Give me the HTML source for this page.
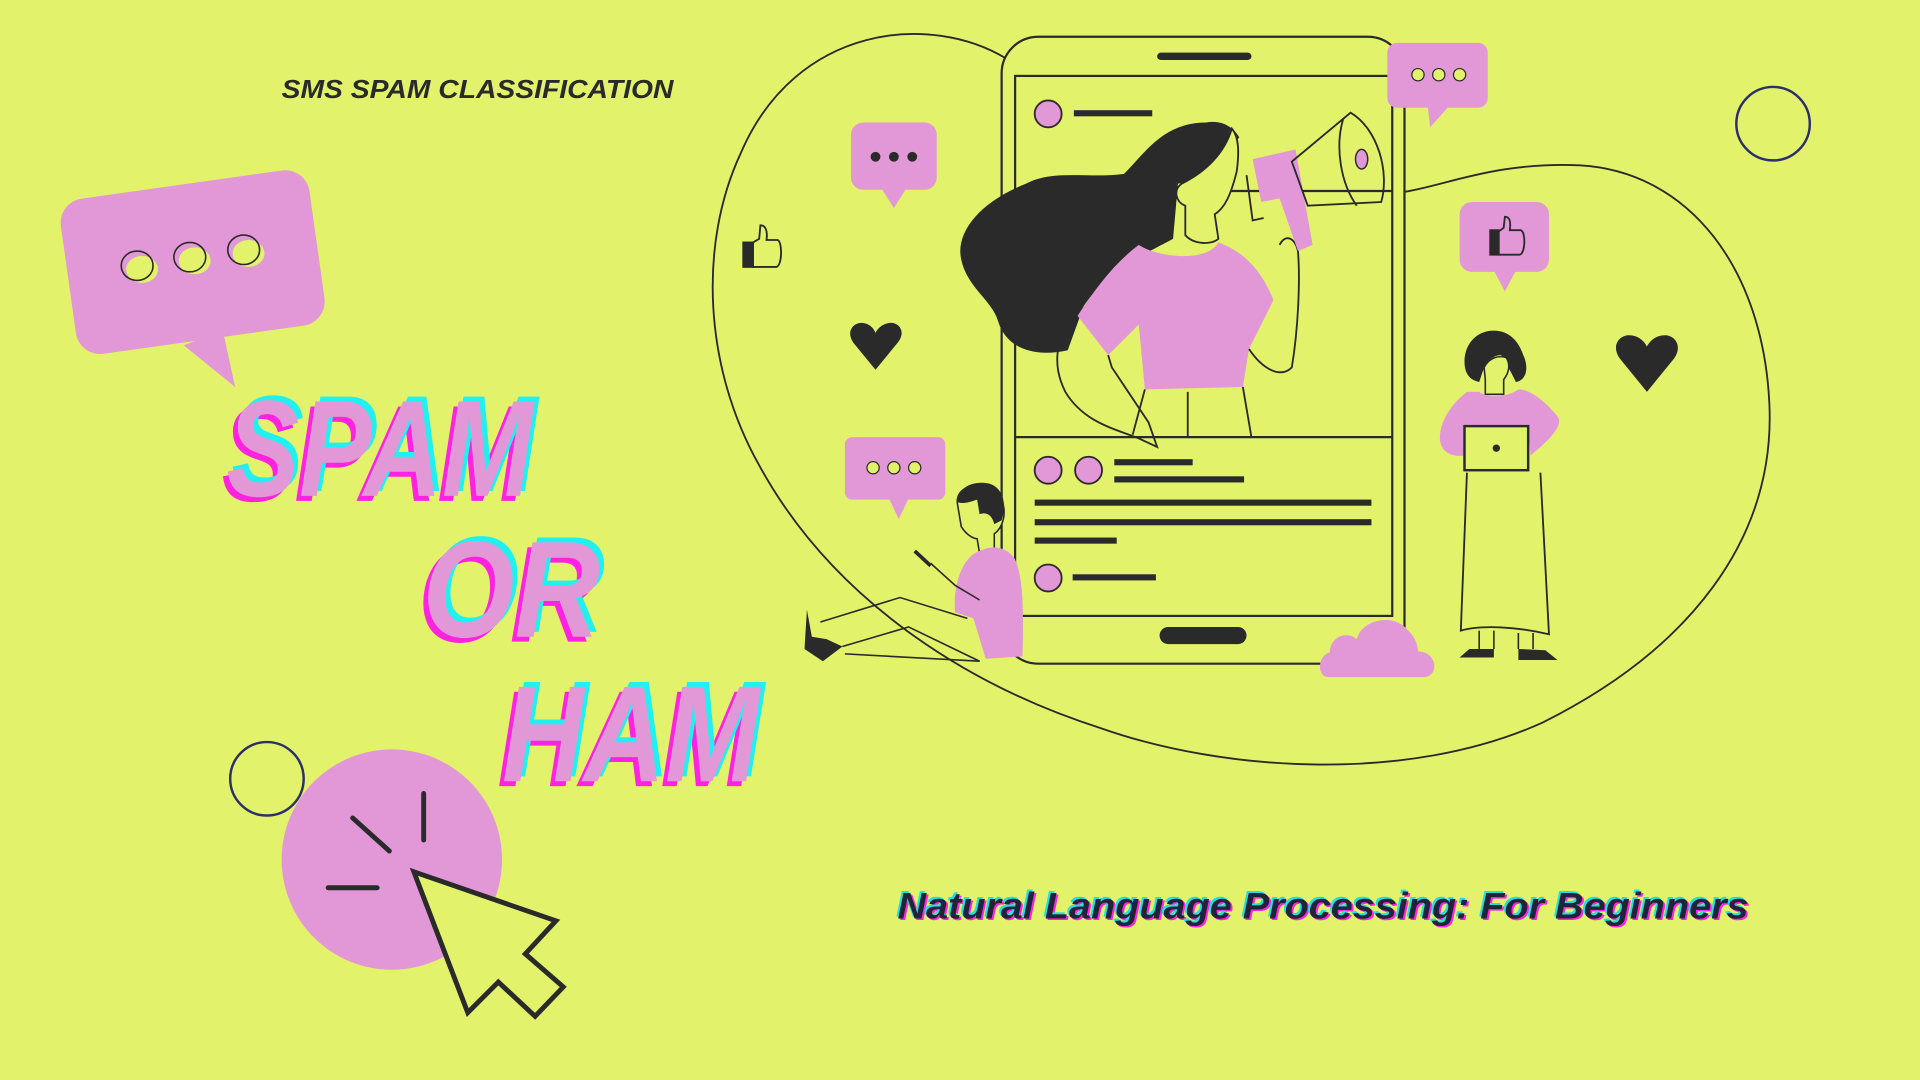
<!DOCTYPE html>
<html><head><meta charset="utf-8"><style>
html,body{margin:0;padding:0;background:#e2f26a;}
svg{display:block}
text{font-family:"Liberation Sans",sans-serif;font-weight:bold;font-style:italic}
</style></head><body>
<svg width="1920" height="1080" viewBox="0 0 1568 882" preserveAspectRatio="none" xmlns="http://www.w3.org/2000/svg">
<rect width="1568" height="882" fill="#e2f26a"/>
<text x="230" y="80" font-size="21" fill="#2a2a2a" textLength="320" lengthAdjust="spacingAndGlyphs">SMS SPAM CLASSIFICATION</text>

<g transform="rotate(-8 158 215)">
<rect x="55" y="150" width="205" height="128" rx="20" fill="#e298d6"/>
</g>
<polygon points="150,282 192,316 182,270" fill="#e298d6"/>
<g fill="#e2f26a"><ellipse cx="116" cy="220" rx="13" ry="11"/><ellipse cx="159" cy="213" rx="13" ry="11"/><ellipse cx="203" cy="207" rx="13" ry="11"/></g>
<g fill="none" stroke="#2a2a2a" stroke-width="1.3">
<ellipse cx="112" cy="217" rx="13" ry="12"/><ellipse cx="155" cy="210" rx="13" ry="12"/><ellipse cx="199" cy="204" rx="13" ry="12"/>
</g>

<g font-size="112">
<text x="181" y="409" fill="#ff22e0" textLength="250" lengthAdjust="spacingAndGlyphs">SPAM</text>
<text x="189" y="401" fill="#22f0f0" textLength="250" lengthAdjust="spacingAndGlyphs">SPAM</text>
<text x="185" y="405" fill="#e298d6" textLength="250" lengthAdjust="spacingAndGlyphs">SPAM</text>
<text x="341" y="524" fill="#ff22e0" textLength="145" lengthAdjust="spacingAndGlyphs">OR</text>
<text x="349" y="516" fill="#22f0f0" textLength="145" lengthAdjust="spacingAndGlyphs">OR</text>
<text x="345" y="520" fill="#e298d6" textLength="145" lengthAdjust="spacingAndGlyphs">OR</text>
<text x="406" y="642" fill="#ff22e0" textLength="210" lengthAdjust="spacingAndGlyphs">HAM</text>
<text x="414" y="634" fill="#22f0f0" textLength="210" lengthAdjust="spacingAndGlyphs">HAM</text>
<text x="410" y="638" fill="#e298d6" textLength="210" lengthAdjust="spacingAndGlyphs">HAM</text>
</g>

<circle cx="218" cy="636" r="30" fill="none" stroke="#2d2f6b" stroke-width="2"/>
<circle cx="1448" cy="101" r="30" fill="none" stroke="#2d2f6b" stroke-width="2"/>

<circle cx="320" cy="702" r="90" fill="#e298d6"/>
<polygon points="338,712 500,766 500,882 403,882" fill="#e2f26a"/>
<g stroke="#2a2a2a" stroke-width="4" stroke-linecap="round" fill="none">
<line x1="288" y1="668" x2="318" y2="695"/><line x1="346" y1="648" x2="346" y2="686"/><line x1="268" y1="725" x2="308" y2="725"/>
<path d="M338,712 L454,752 L429,779 L460,806 L437,830 L407,802 L382,827 Z"/>
</g>

<path d="M822,48 C760,10 650,20 605,125 C570,200 575,300 620,380 C680,490 790,560 900,595 C1000,630 1150,640 1260,590 C1380,530 1450,440 1445,330 C1440,220 1380,140 1290,135 C1220,132 1180,152 1145,157" fill="none" stroke="#2a2a2a" stroke-width="1.5"/>

<rect x="818" y="30" width="329" height="512" rx="30" fill="#e2f26a" stroke="#2a2a2a" stroke-width="1.8"/>
<rect x="829" y="62" width="308" height="441" fill="none" stroke="#2a2a2a" stroke-width="1.8"/>
<line x1="948" y1="46" x2="1019" y2="46" stroke="#2a2a2a" stroke-width="6" stroke-linecap="round"/>
<rect x="947" y="512" width="71" height="14" rx="7" fill="#2a2a2a"/>
<line x1="829" y1="156" x2="1137" y2="156" stroke="#2a2a2a" stroke-width="1.8"/>
<line x1="829" y1="357" x2="1137" y2="357" stroke="#2a2a2a" stroke-width="1.8"/>
<g fill="#e298d6" stroke="#2a2a2a" stroke-width="1.5">
<circle cx="856" cy="93" r="11"/><circle cx="856" cy="384" r="11"/><circle cx="889" cy="384" r="11"/><circle cx="856" cy="472" r="11"/>
</g>
<g fill="#2a2a2a">
<rect x="877" y="90" width="64" height="5"/><rect x="910" y="375" width="64" height="5"/><rect x="910" y="389" width="106" height="5"/>
<rect x="845" y="408" width="275" height="5"/><rect x="845" y="424" width="275" height="5"/><rect x="845" y="439" width="67" height="5"/>
<rect x="876" y="469" width="68" height="5"/>
</g>

<path d="M985,100 C950,100 935,125 918,142 C890,146 860,138 838,150 C800,165 780,190 785,212 C790,235 810,245 815,262 C822,285 845,292 872,286 L885,250 C905,220 940,205 958,195 L962,150 C980,148 1002,128 1012,112 C1006,102 996,98 985,100 Z" fill="#2a2a2a"/>
<path d="M1006,105 C1000,125 985,140 965,150 C958,155 960,165 968,168 L968,192 C975,200 990,200 995,195 L992,175 C1000,170 1005,160 1010,140 C1012,125 1012,112 1006,105 Z" fill="#e2f26a" stroke="#2a2a2a" stroke-width="1.5"/>
<path d="M930,200 C945,210 985,215 995,198 C1015,205 1030,220 1040,245 L1020,285 L1015,316 L935,318 L930,265 L905,290 L880,258 C895,235 910,215 930,200 Z" fill="#e298d6"/>
<path d="M880,258 C860,275 860,300 870,320 C885,345 910,350 930,358 L945,365 L938,345 L908,300 L905,290" fill="none" stroke="#2a2a2a" stroke-width="1.5"/>
<path d="M1020,285 C1030,300 1045,310 1055,300 C1060,270 1062,230 1060,205 C1058,195 1050,190 1045,200" fill="none" stroke="#2a2a2a" stroke-width="1.5"/>
<path d="M935,318 L925,355 M1015,316 L1022,357 M970,320 L970,357" stroke="#2a2a2a" stroke-width="1.5"/>
<path d="M1023,130 L1058,122 L1072,200 L1060,205 L1045,162 L1030,165 Z" fill="#e298d6"/>
<path d="M1055,132 L1103,92 C1125,105 1135,140 1128,165 L1068,168 Z" fill="none" stroke="#2a2a2a" stroke-width="1.5"/>
<path d="M1097,97 C1090,120 1095,150 1108,168" fill="none" stroke="#2a2a2a" stroke-width="1.5"/>
<ellipse cx="1112" cy="130" rx="5" ry="8" fill="#e298d6" stroke="#2a2a2a" stroke-width="1.2"/>
<path d="M1018,143 L1023,180 L1032,178" fill="none" stroke="#2a2a2a" stroke-width="1.5"/>

<rect x="695" y="100" width="70" height="55" rx="10" fill="#e298d6"/><polygon points="720,154 740,154 730,170" fill="#e298d6"/>
<g fill="#2a2a2a"><circle cx="715" cy="128" r="4"/><circle cx="730" cy="128" r="4"/><circle cx="745" cy="128" r="4"/></g>
<rect x="1133" y="35" width="82" height="53" rx="8" fill="#e298d6"/><polygon points="1166,87 1183,87 1168,104" fill="#e298d6"/>
<g fill="#e2f26a" stroke="#2a2a2a" stroke-width="1"><circle cx="1158" cy="61" r="5"/><circle cx="1175" cy="61" r="5"/><circle cx="1192" cy="61" r="5"/></g>
<rect x="1192" y="165" width="73" height="57" rx="10" fill="#e298d6"/><polygon points="1220,221 1238,221 1229,238" fill="#e298d6"/>
<rect x="690" y="357" width="82" height="51" rx="6" fill="#e298d6"/><polygon points="726,407 742,407 734,424" fill="#e298d6"/>
<g fill="#e2f26a" stroke="#2a2a2a" stroke-width="1"><circle cx="713" cy="382" r="5"/><circle cx="730" cy="382" r="5"/><circle cx="747" cy="382" r="5"/></g>

<g stroke="#2a2a2a" stroke-width="1.5" fill="#e2f26a">
<rect x="607" y="198" width="8" height="20" fill="#2a2a2a"/>
<path d="M615,198 L620,195 L621,184 C625,184 627,188 626,196 L635,196 C639,197 639,217 634,218 L615,218 Z"/>
<rect x="1217" y="188" width="7" height="20" fill="#2a2a2a"/>
<path d="M1224,189 L1228,186 L1229,177 C1233,177 1234,181 1233,188 L1242,188 C1246,189 1246,207 1241,208 L1224,208 Z" fill="#e298d6"/>
</g>

<path d="M715,302 L697,280 C690,270 698,262 706,264 C711,265 714,269 715,272 C716,269 720,265 725,264 C733,262 741,270 733,280 Z" fill="#2a2a2a"/>
<path d="M1345,320 L1323,293 C1315,282 1323,272 1333,274 C1339,275 1343,279 1345,283 C1347,279 1351,275 1357,274 C1367,272 1375,282 1367,293 Z" fill="#2a2a2a"/>

<path d="M800,398 C790,395 780,402 782,412 L785,430 C790,438 796,440 798,440 L800,452 L812,450 L812,436 C820,430 822,418 818,408 C815,400 808,396 800,398 Z" fill="#e2f26a" stroke="#2a2a2a" stroke-width="1.3"/>
<path d="M782,410 C782,398 795,392 808,395 C818,398 823,410 818,425 L812,428 C810,420 805,418 800,420 L798,408 C792,410 786,412 782,410 Z" fill="#2a2a2a"/>
<path d="M800,450 C785,455 778,480 780,500 L795,505 L805,538 L835,536 C836,500 836,470 828,455 C820,446 810,445 800,450 Z" fill="#e298d6"/>
<path d="M760,460 L780,478 L800,490" fill="none" stroke="#2a2a2a" stroke-width="1.3"/>
<line x1="747" y1="450" x2="760" y2="462" stroke="#2a2a2a" stroke-width="3"/>
<path d="M670,508 L735,488 L790,505 M688,528 L742,512 L800,540 L690,534" fill="none" stroke="#2a2a2a" stroke-width="1.3"/>
<path d="M659,498 L663,520 L675,522 L688,528 L672,540 L657,530 Z" fill="#2a2a2a"/>

<path d="M1220,270 C1205,270 1196,282 1196,295 C1196,305 1200,310 1208,312 L1212,300 C1216,292 1222,290 1226,290 L1234,304 L1238,312 C1248,310 1248,298 1244,290 C1240,278 1232,270 1220,270 Z" fill="#2a2a2a"/>
<path d="M1213,310 L1213,322 L1228,322 L1228,310 C1232,305 1234,298 1230,292 C1224,290 1216,292 1212,300 Z" fill="#e2f26a" stroke="#2a2a2a" stroke-width="1.3"/>
<path d="M1198,320 C1185,330 1175,345 1176,360 C1178,372 1190,373 1196,372 L1196,350 L1248,350 L1250,372 C1262,362 1278,348 1272,340 C1262,328 1250,318 1240,318 C1232,324 1216,326 1208,320 Z" fill="#e298d6"/>
<rect x="1196" y="348" width="52" height="36" fill="#e2f26a" stroke="#2a2a2a" stroke-width="2"/>
<circle cx="1222" cy="366" r="3" fill="#2a2a2a"/>
<path d="M1198,386 L1193,515 C1210,510 1240,512 1265,518 L1258,386" fill="none" stroke="#2a2a2a" stroke-width="1.5"/>
<path d="M1208,515 L1208,530 M1220,515 L1220,530 M1240,517 L1240,530 M1252,517 L1252,530" stroke="#2a2a2a" stroke-width="1.3"/>
<path d="M1192,537 L1220,537 L1220,530 L1200,530 Z M1240,530 L1262,531 L1272,539 L1240,539 Z" fill="#2a2a2a"/>

<path d="M1085,553 C1075,553 1076,535 1086,533 C1086,520 1100,515 1108,522 C1112,506 1138,500 1150,515 C1156,520 1158,528 1158,532 C1174,532 1176,553 1162,553 Z" fill="#e298d6"/>

<g font-size="30">
<text x="734.5" y="751.5" fill="#ff22e0" textLength="695" lengthAdjust="spacingAndGlyphs">Natural Language Processing: For Beginners</text>
<text x="731.5" y="748.5" fill="#22e0e0" textLength="695" lengthAdjust="spacingAndGlyphs">Natural Language Processing: For Beginners</text>
<text x="733" y="750" fill="#22233a" textLength="695" lengthAdjust="spacingAndGlyphs">Natural Language Processing: For Beginners</text>
</g>
</svg>
</body></html>
